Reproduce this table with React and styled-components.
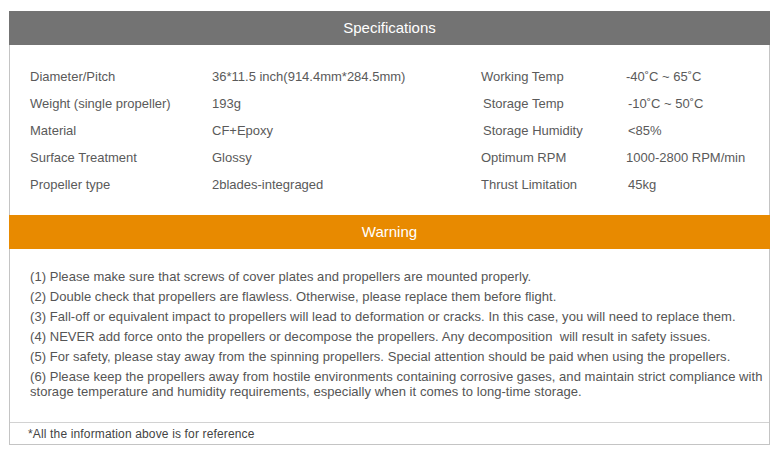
import React from "react";
import styled, { createGlobalStyle } from "styled-components";

const Global = createGlobalStyle`
  html, body { margin: 0; padding: 0; background: #fff; }
  body { font-family: "Liberation Sans", Arial, sans-serif; }
`;

const Frame = styled.div`
  margin: 11px 0 0 9px;
  width: 759px;
  border: 1px solid #c4c4c4;
  border-top: none;
`;

const Bar = styled.div`
  height: 34px;
  display: flex;
  align-items: center;
  justify-content: center;
  background: ${(p) => p.$bg};
  color: #fff;
  font-size: 15px;
  margin: 0 -1px;
  padding-bottom: 1px;
  box-sizing: border-box;
`;

const Specs = styled.div`
  padding: 18px 0 17px 20px;
  display: grid;
  grid-template-columns: 182px 269px 145px 1fr;
  grid-auto-rows: 27px;
  align-items: center;
  font-size: 13px;
  color: #5a5a5a;
`;

const Cell = styled.div`
  padding-left: ${(p) => (p.$shift ? "2px" : "0")};
  white-space: nowrap;
`;

const Warnings = styled.div`
  padding: 20px 0 18px 20px;
  font-size: 13px;
  letter-spacing: 0.05px;
  color: #555;
`;

const Item = styled.p`
  margin: 0 0 5px;
  line-height: 15px;
`;

const Footer = styled.div`
  border-top: 1px solid #d2d2d2;
  height: 21px;
  display: flex;
  align-items: center;
  padding-left: 18px;
  font-size: 12px;
  letter-spacing: 0.15px;
  color: #444;
`;

const specs = [
  ["Diameter/Pitch", "36*11.5 inch(914.4mm*284.5mm)", "Working Temp", "-40\u02daC ~ 65\u02daC", false, false],
  ["Weight (single propeller)", "193g", "Storage Temp", "-10\u02daC ~ 50\u02daC", true, true],
  ["Material", "CF+Epoxy", "Storage Humidity", "<85%", true, true],
  ["Surface Treatment", "Glossy", "Optimum RPM", "1000-2800 RPM/min", false, false],
  ["Propeller type", "2blades-integraged", "Thrust Limitation", "45kg", false, true],
];

const warnings = [
  "(1) Please make sure that screws of cover plates and propellers are mounted properly.",
  "(2) Double check that propellers are flawless. Otherwise, please replace them before flight.",
  "(3) Fall-off or equivalent impact to propellers will lead to deformation or cracks. In this case, you will need to replace them.",
  "(4) NEVER add force onto the propellers or decompose the propellers. Any decomposition \u00a0will result in safety issues.",
  "(5) For safety, please stay away from the spinning propellers. Special attention should be paid when using the propellers.",
  "(6) Please keep the propellers away from hostile environments containing corrosive gases, and maintain strict compliance with storage temperature and humidity requirements, especially when it comes to long-time storage.",
];

export default function App() {
  return (
    <>
      <Global />
      <Frame>
        <Bar $bg="#737373">Specifications</Bar>
        <Specs>
          {specs.map(([a, b, c, d, s1, s2]) => (
            <React.Fragment key={a}>
              <Cell>{a}</Cell>
              <Cell>{b}</Cell>
              <Cell $shift={s1}>{c}</Cell>
              <Cell $shift={s2}>{d}</Cell>
            </React.Fragment>
          ))}
        </Specs>
        <Bar $bg="#e88a00">Warning</Bar>
        <Warnings>
          {warnings.map((w) => (
            <Item key={w}>{w}</Item>
          ))}
        </Warnings>
        <Footer>*All the information above is for reference</Footer>
      </Frame>
    </>
  );
}
